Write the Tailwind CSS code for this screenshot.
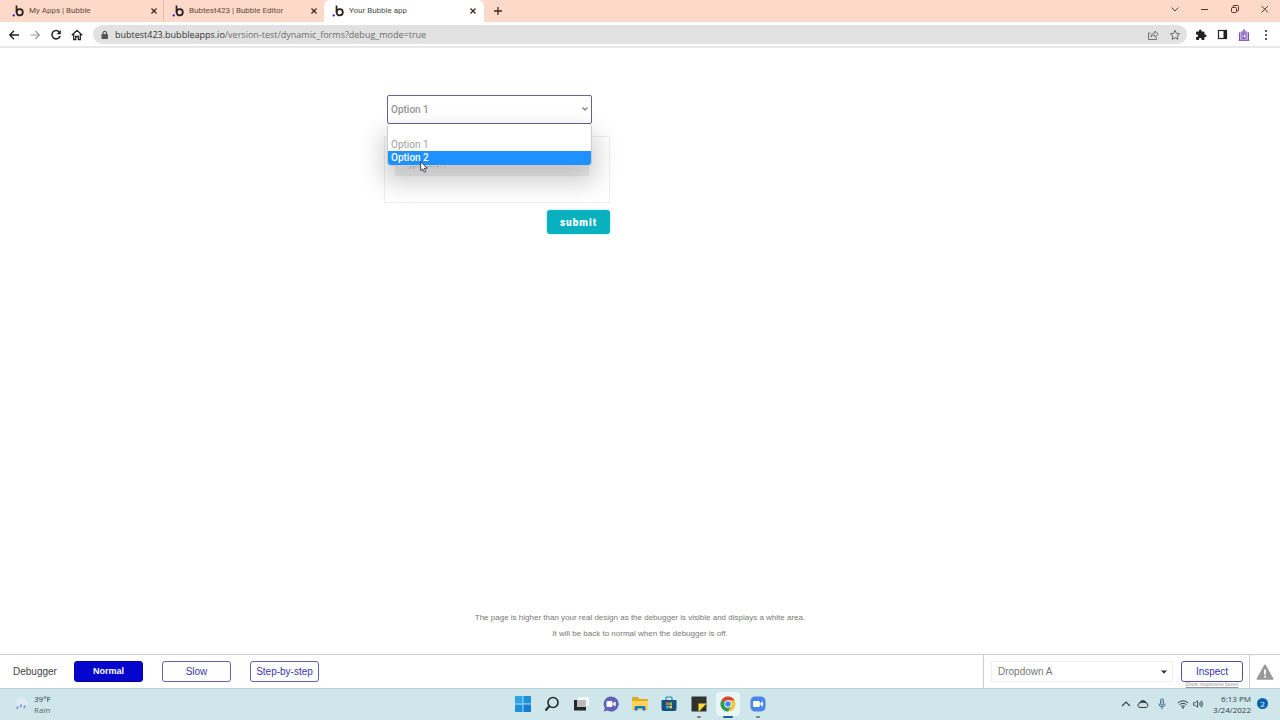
<!DOCTYPE html>
<html lang="en">
<head>
  <meta charset="UTF-8" />
  <meta name="viewport" content="width=device-width, initial-scale=1.0"/>
  <title>Your Bubble app</title>
  <script src="https://cdn.jsdelivr.net/npm/@tailwindcss/browser@4"></script>
</head>

<body class="bg-white h-screen flex flex-col overflow-hidden font-['Liberation_Sans',sans-serif]">
  <!-- Shared logo -->
  <svg class="hidden">
    <symbol id="logo" viewBox="0 0 12 12">
      <path d="M4.5 0.5V7.2" stroke="#2b2020" stroke-width="1.7" fill="none"/>
      <circle cx="7.7" cy="7.3" r="3.1" stroke="#2b2020" stroke-width="1.8" fill="none"/>
      <circle cx="1.7" cy="10.4" r="1.1" fill="#2a10d8"/>
    </symbol>
    <symbol id="close" viewBox="0 0 8 8">
      <path d="M1.5 1.5l5 5M6.5 1.5l-5 5" stroke="#3c2a24" stroke-width="1.3" fill="none"/>
    </symbol>
  </svg>

  <!-- Tab strip -->
  <header class="h-[22px] shrink-0 bg-[#fcd9c8] flex items-center pl-1 text-[8px] text-[#65493e] font-['Roboto',sans-serif]">
    <nav class="flex h-full">
      <div class="w-40 flex items-center pl-2 pr-[5px] border-r border-[#d5aa98]/60">
        <svg class="size-3 shrink-0"><use href="#logo"/></svg>
        <a href="#" class="ml-[5px] flex-1 whitespace-nowrap">My Apps | Bubble</a>
        <button aria-label="Close tab"><svg class="size-2"><use href="#close"/></svg></button>
      </div>
      <div class="w-40 flex items-center pl-2 pr-1.5">
        <svg class="size-3 shrink-0"><use href="#logo"/></svg>
        <a href="#" class="ml-[5px] flex-1 whitespace-nowrap">Bubtest423 | Bubble Editor</a>
        <button aria-label="Close tab"><svg class="size-2"><use href="#close"/></svg></button>
      </div>
      <div class="w-40 flex items-center pl-2 pr-[7px] bg-white rounded-t-md text-[#4a4a4a]">
        <svg class="size-3 shrink-0"><use href="#logo"/></svg>
        <a href="#" class="ml-[5px] flex-1 whitespace-nowrap">Your Bubble app</a>
        <button aria-label="Close tab"><svg class="size-2"><use href="#close"/></svg></button>
      </div>
    </nav>
    <button class="ml-2" aria-label="New tab">
      <svg class="size-3" viewBox="0 0 12 12"><path d="M6 2v8M2 6h8" stroke="#3c2a24" stroke-width="1.3"/></svg>
    </button>
    <div class="ml-auto flex items-center gap-5 pr-2.5 pb-1 text-[#5a3528]">
      <button aria-label="Search tabs"><svg class="size-2.5" viewBox="0 0 10 10" fill="none" stroke="currentColor"><path d="M1.5 3.500l3.500 3.500 3.500-3.500"/></svg></button>
      <button aria-label="Minimize"><svg class="size-2.5" viewBox="0 0 10 10" fill="none" stroke="currentColor"><path d="M1 5.5h7"/></svg></button>
      <button aria-label="Restore"><svg class="size-2.5" viewBox="0 0 10 10" fill="none" stroke="currentColor"><rect x="1.5" y="3.5" width="5" height="5" rx="1"/><path d="M3 3.500V2.500q0-1 1-1h3.500q1 0 1 1v3.500q0 1-1 1h-1"/></svg></button>
      <button aria-label="Close"><svg class="size-2.5" viewBox="0 0 10 10" fill="none" stroke="currentColor"><path d="M1.500 2l6.500 6.500M8 2L1.500 8.500"/></svg></button>
    </div>
  </header>

  <!-- Address bar -->
  <div class="h-[26px] shrink-0 border-b-2 border-[#e8e8e8] flex items-center pl-2 pr-2 pt-px">
    <div class="flex items-center gap-[9px] text-[#222]">
      <button aria-label="Back"><svg class="size-3" viewBox="0 0 12 12" fill="none" stroke="currentColor" stroke-width="1.4"><path d="M11 6H2.200M6 1.800L1.800 6 6 10.200"/></svg></button>
      <button aria-label="Forward" class="text-[#999]"><svg class="size-3" viewBox="0 0 12 12" fill="none" stroke="currentColor" stroke-width="1.2"><path d="M1.500 6h8.500M6.200 1.800L10.400 6l-4.200 4.200"/></svg></button>
      <button aria-label="Reload"><svg class="size-3" viewBox="0 0 12 12"><path d="M9.600 3.300A4.200 4.200 0 1 0 10.100 7" fill="none" stroke="currentColor" stroke-width="1.500"/><path d="M10.800 1v4.300H6.500z" fill="currentColor"/></svg></button>
      <button aria-label="Home"><svg class="size-3" viewBox="0 0 12 12" fill="none" stroke="currentColor" stroke-width="1.300"><path d="M.800 6.200L6 1.300l5.200 4.900M2.700 5v5.700h2V7.500h2.600v3.200h2V5"/></svg></button>
    </div>
    <div class="ml-2.5 flex-1 h-[19px] rounded-full bg-[#e1e1e1] flex items-center pl-[7px] pr-1.5">
      <svg class="size-2.5" viewBox="0 0 10 10"><rect x="1.500" y="4" width="6.500" height="5" rx=".8" fill="#555"/><path d="M3 4.300V2.800a1.800 1.800 0 0 1 3.500 0v1.500" fill="none" stroke="#555" stroke-width="1.100"/></svg>
      <p class="ml-[5px] flex-1 text-[9px] text-[#6d6d6d] font-['Open_Sans',sans-serif]"><span class="text-[#333]">bubtest423.bubbleapps.io</span>/version-test/dynamic_forms?debug_mode=true</p>
      <div class="flex items-center gap-2.5 text-[#666]">
        <button aria-label="Share"><svg class="size-3" viewBox="0 0 12 12" fill="none" stroke="currentColor" stroke-width=".9"><path d="M3.500 4H1.500v6.500h8V8.500"/><path d="M3.700 8C4 5.300 5.700 4 8 4V2l3.300 3.200L8 8.200v-2C6 6.200 4.700 6.700 3.700 8z"/></svg></button>
        <button aria-label="Bookmark"><svg class="size-3" viewBox="0 0 12 12" fill="none" stroke="currentColor"><path d="M6 1.400l1.400 3 3.200.4-2.400 2.200.7 3.300L6 8.700l-2.900 1.600.7-3.300L1.400 4.800l3.200-.4z"/></svg></button>
      </div>
    </div>
    <div class="ml-2 flex items-center gap-2.5 text-[#222]">
      <button aria-label="Extensions"><svg class="size-3" viewBox="0 0 24 24" fill="currentColor"><path d="M20.500 11H19V7a2 2 0 0 0-2-2h-4V3.500a2.500 2.500 0 0 0-5 0V5H4a2 2 0 0 0-2 2v3.800h1.500a2.700 2.700 0 0 1 0 5.400H2V20a2 2 0 0 0 2 2h3.800v-1.500a2.700 2.700 0 0 1 5.400 0V22H17a2 2 0 0 0 2-2v-4h1.500a2.500 2.500 0 0 0 0-5z"/></svg></button>
      <button aria-label="Side panel"><svg class="size-[11px]" viewBox="0 0 11 11"><rect x="1.500" y="1.500" width="8" height="8" fill="none" stroke="currentColor" stroke-width="1.200"/><path d="M6.500 1.500h3v8h-3z" fill="currentColor"/></svg></button>
      <button aria-label="Profile"><svg class="size-3" viewBox="0 0 12 12"><path d="M1 12V4l2-1.500L4.500 2.500V1L6 0l1.800 1.200v1.300H9.500L11 4v8z" fill="#c4aee4"/><path d="M1.500 11V3.500M4 5V2.500M6 .5V5m2-.5v-2M10.500 11V3.500M.5 11.300h11" stroke="#7044ac" stroke-width=".9"/><circle cx="6" cy="7.300" r="2.400" fill="#eee3fa" stroke="#6c40a8" stroke-width=".8"/><path d="M5.300 5.500v3.500h2" stroke="#6c40a8" stroke-width=".8" fill="none"/></svg></button>
      <button aria-label="Menu"><svg class="size-3" viewBox="0 0 12 12" fill="currentColor"><circle cx="6" cy="2" r="1"/><circle cx="6" cy="6" r="1"/><circle cx="6" cy="10" r="1"/></svg></button>
    </div>
  </div>

  <!-- App page -->
  <main class="flex-1 flex flex-col justify-between">
    <form class="ml-[30%] w-[226px] pt-[47px]" onsubmit="return false">
      <div class="relative z-10 ml-[3px] w-[205px] text-[10px] leading-[13px] font-medium text-[#a0a0a0] font-['Roboto',sans-serif]">
        <select aria-label="Option" class="block w-full h-[29px] appearance-none border border-[#66638c] rounded-xs bg-white px-[3px] text-[#949494] focus:outline-none">
          <option>Option 1</option>
          <option>Option 2</option>
        </select>
        <svg class="absolute right-[3px] top-2.5 size-2" viewBox="0 0 8 8" fill="none" stroke="#777" stroke-width="1.200"><path d="M1.500 2.500L4 5l2.500-2.500"/></svg>
        <ul class="absolute top-full inset-x-0 pt-3.5 border border-t-0 border-[#ccc] bg-white rounded overflow-hidden shadow-[0_12px_24px_4px_rgba(0,0,0,0.2)]">
          <li class="px-[3px] font-normal">Option 1</li>
          <li class="px-[3px] h-3.5 bg-[#1e90ff] text-white">Option 2</li>
        </ul>
        <!-- Mouse pointer -->
        <svg class="absolute left-[33px] top-[66px] w-2 h-3" viewBox="0 0 8 12"><path d="M.700.800v8.900l2-1.900 1.500 3.400 1.600-.7L4.300 7.200h3z" fill="#fff" stroke="#222" stroke-width=".8"/></svg>
      </div>

      <div class="mt-3 h-[67px] border border-[#eee] px-2.5 pt-[15px]">
        <input type="text" aria-label="Answer" placeholder="Type here..." class="block w-[194px] h-6 bg-[#f3f3f3] border border-[#eee] px-2 text-[8px] text-[#888]"/>
      </div>

      <button class="block ml-auto mt-[7px] w-[63px] h-6 rounded-[3px] bg-[#09b1c0] text-white text-[10px] font-black tracking-widest font-['Roboto',sans-serif] shadow-[0_0_3px_rgba(9,177,192,0.4)]">submit</button>
    </form>

    <div class="pb-3 text-center text-[8px] leading-4 text-[#777]">
      <p>The page is higher than your real design as the debugger is visible and displays a white area.</p>
      <p>It will be back to normal when the debugger is off.</p>
    </div>
  </main>

  <!-- Debugger -->
  <section class="h-[34px] shrink-0 border-t border-[#ccc] flex items-center pl-[13px] text-[10px] text-[#444]">
    <p class="w-[61px]">Debugger</p>
    <div class="flex gap-[19px] text-[#3a35a5]">
      <button class="w-[69px] h-[21px] rounded-[3px] border border-[#0500a0] bg-[#0404cc] text-white font-bold text-[9px]">Normal</button>
      <button class="w-[69px] h-[21px] rounded-[3px] border border-[#6460b0]">Slow</button>
      <button class="w-[69px] h-[21px] rounded-[3px] border border-[#6460b0]">Step-by-step</button>
    </div>
    <div class="ml-auto h-full flex items-center border-l border-[#ccc] pl-[7px]">
      <div class="relative">
        <select aria-label="Element" class="block w-[182px] h-[21px] appearance-none border border-[#eee] bg-white pl-1.5 text-[10px] text-[#777]">
          <option>Dropdown A</option>
        </select>
        <svg class="absolute right-1.5 top-2 size-1.5" viewBox="0 0 6 6"><path d="M0 1.500h6L3 4.800z" fill="#333"/></svg>
      </div>
      <div class="relative ml-2">
        <button class="block w-[62px] h-[21px] rounded-[3px] border border-[#504ca8] text-[#3a35a5]">Inspect</button>
        <a href="#" class="absolute top-full inset-x-0 text-center text-[5px] leading-[5px] whitespace-nowrap text-[#999] underline">Show responsive boxes</a>
      </div>
      <div class="ml-1.5 h-full border-l border-[#ccc] w-[31px] flex items-center justify-center">
        <svg class="w-[18px] h-4" viewBox="0 0 18 16"><path d="M9 1.200L16.800 15H1.200z" fill="#999" stroke="#999" stroke-width="1.500" stroke-linejoin="round"/><path d="M9 5.500v5M9 11.800v1.700" stroke="#fff" stroke-width="1.800"/></svg>
      </div>
    </div>
  </section>

  <!-- Windows taskbar -->
  <footer class="h-8 shrink-0 bg-[#cfe7ea] border-t border-[#bed5d8] grid grid-cols-[1fr_259px_1fr] items-center font-['Open_Sans',sans-serif]">
    <div class="flex items-center gap-1 pl-3.5 pb-0.5 text-[8px] leading-[11px] text-[#56686c]">
      <svg class="size-4" viewBox="0 0 16 16"><path d="M3 9a3 3 0 0 1 1-5.500 4 4 0 0 1 7.500 1A2.800 2.800 0 0 1 12 10z" fill="#dfeaf2"/><path d="M4 10.500l-1.200 2.500M7.500 8.500L6.300 11M11 9.500L9.800 12" stroke="#6685d8" stroke-width="1.400"/></svg>
      <div><p class="text-[#263b40]">39°F</p><p>Rain</p></div>
    </div>

    <div class="flex justify-between items-center pb-px">
      <button aria-label="Start" class="size-6 grid place-items-center"><svg class="size-4" viewBox="0 0 16 16" fill="#1580d0"><path d="M0 0h7.600v7.600H0z" fill="#2fa4e8"/><path d="M8.400 0H16v7.600H8.400zM0 8.400h7.600V16H0z" fill="#1c91dc"/><path d="M8.400 8.400H16V16H8.400z"/></svg></button>
      <button aria-label="Search" class="size-6 grid place-items-center"><svg class="size-4" viewBox="0 0 16 16" fill="none" stroke="#23292c" stroke-width="1.600"><circle cx="9" cy="6.500" r="5"/><path d="M5.500 10L1.500 14.500" stroke-width="2"/></svg></button>
      <button aria-label="Task view" class="size-6 grid place-items-center"><svg class="size-4" viewBox="0 0 16 16"><path d="M5 1h11v9H5z" fill="#f4f7f8"/><path d="M1 4h3v7h9v3.500H1z" fill="#25282a"/><path d="M4 4h9v7H4z" fill="#b8bcbd"/></svg></button>
      <button aria-label="Chat" class="size-6 grid place-items-center"><svg class="size-4" viewBox="0 0 16 16"><path d="M8 .5a7.500 7.500 0 1 1-3.500 14L.8 15.500l1-3.500A7.500 7.500 0 0 1 8 .5z" fill="#5f60b8"/><rect x="3.500" y="5" width="6" height="6" rx="1.200" fill="#fff"/><path d="M10 7.300L12.700 5.500v5L10 8.700z" fill="#fff"/></svg></button>
      <button aria-label="File Explorer" class="size-6 grid place-items-center"><svg class="size-4" viewBox="0 0 16 16"><path d="M0 2q0-1 1-1h4.500l2 2H15q1 0 1 1v9.500H0z" fill="#e6a91e"/><path d="M0 5h16v9H0z" fill="#ffd45c"/><path d="M2.500 14.500v-3q0-1.500 1.500-1.500h8q1.500 0 1.500 1.500v3h-3v-2h-5v2z" fill="#1777c4"/></svg></button>
      <button aria-label="Store" class="size-6 grid place-items-center"><svg class="size-4" viewBox="0 0 16 16"><path d="M5 4V2q0-1 1-1h4q1 0 1 1v2" fill="none" stroke="#2b87b8" stroke-width="1.200"/><path d="M.5 4h15v9q0 2-2 2h-11q-2 0-2-2z" fill="#15537e"/><path d="M5 6.300h2.700V9H5z" fill="#ee6840"/><path d="M8.300 6.300H11V9H8.300z" fill="#86c34a"/><path d="M5 9.600h2.700v2.700H5z" fill="#35b2ee"/><path d="M8.300 9.600H11v2.700H8.300z" fill="#f8c73a"/></svg></button>
      <button aria-label="Sticky Notes" class="relative size-6 grid place-items-center"><svg class="size-4" viewBox="0 0 16 16"><path d="M.5.5h15v15H.5z" fill="#303230"/><path d="M7.500 7.500h8L8.500 15h-1z" fill="#f7dd33"/></svg><span class="absolute -bottom-0.5 w-1 h-0.5 rounded-full bg-[#718285]"></span></button>
      <button aria-label="Chrome" class="relative size-6 grid place-items-center bg-[#eaf5f7] rounded-sm"><svg class="size-4" viewBox="0 0 16 16"><circle cx="8" cy="8" r="7.500" fill="#f4c531"/><path d="M8 8L1.500 4.250A7.500 7.500 0 0 1 14.500 4.250H8z" fill="#db4437"/><path d="M8 8L1.500 4.250A7.500 7.500 0 0 0 8 15.500L11.200 10z" fill="#2c9d58"/><circle cx="8" cy="8" r="3.700" fill="#fff"/><circle cx="8" cy="8" r="2.800" fill="#4285f4"/></svg><span class="absolute -bottom-0.5 w-2.5 h-0.5 rounded-full bg-[#17659c]"></span></button>
      <button aria-label="Zoom" class="relative size-6 grid place-items-center"><svg class="size-4" viewBox="0 0 16 16"><rect x=".5" y=".5" width="15" height="15" rx="4.500" fill="#4a86e8"/><rect x="3" y="5" width="6.800" height="6" rx="1.300" fill="#fff"/><path d="M10.300 7.200L13 5.300v5.400l-2.700-1.900z" fill="#fff"/></svg><span class="absolute -bottom-0.5 w-1 h-0.5 rounded-full bg-[#718285]"></span></button>
    </div>

    <div class="flex items-center justify-end pr-3 pb-0.5 text-[#2f4347]">
      <svg class="size-2.5" viewBox="0 0 10 10" fill="none" stroke="currentColor" stroke-width="1.100"><path d="M1 7l4-4 4 4"/></svg>
      <svg class="ml-1.5 w-3 h-2.5" viewBox="0 0 12 10"><path d="M3 8.500a2.300 2.300 0 0 1-.3-4.500 3.400 3.400 0 0 1 6.300-.3 2.500 2.500 0 0 1 .2 4.800z" fill="#d3dcdf" stroke="currentColor"/><path d="M2 4.500q4-1.500 8 0L8.500 2.500Q6 0 3.500 2.500z" fill="currentColor"/></svg>
      <svg class="ml-2 w-2.5 h-3" viewBox="0 0 10 12" fill="none" stroke="#46708f"><rect x="3.500" y="1" width="3" height="6" rx="1.500" fill="#a5c5d8"/><path d="M1.800 5.500a3.200 3.200 0 0 0 6.400 0M5 8.800v2.500"/></svg>
      <svg class="ml-2.5 w-3 h-2.5" viewBox="0 0 12 10" fill="none" stroke="currentColor"><path d="M.800 4a7.400 7.400 0 0 1 10.400 0M2.500 5.800a5 5 0 0 1 7 0M4.200 7.500a2.600 2.600 0 0 1 3.600 0"/><circle cx="6" cy="8.800" r=".5" fill="currentColor"/></svg>
      <svg class="ml-1 w-2.5 h-2.5" viewBox="0 0 10 10" fill="none" stroke="currentColor" stroke-width=".8"><path d="M.5 3.700h1.700L4.500 1.700v6.600L2.200 6.300H.5zM6 3.500q1 1.500 0 3M7.300 2.500q1.800 2.500 0 5M8.500 1.500q2.300 3.500 0 7"/></svg>
      <p class="ml-2 w-10 text-right text-[8px] leading-[11px] whitespace-nowrap">6:13 PM<br>3/24/2022</p>
      <span class="ml-1.5 size-[11px] rounded-full bg-[#0962ae] text-white text-[8px] leading-[11px] text-center">2</span>
    </div>
  </footer>
</body>
</html>
